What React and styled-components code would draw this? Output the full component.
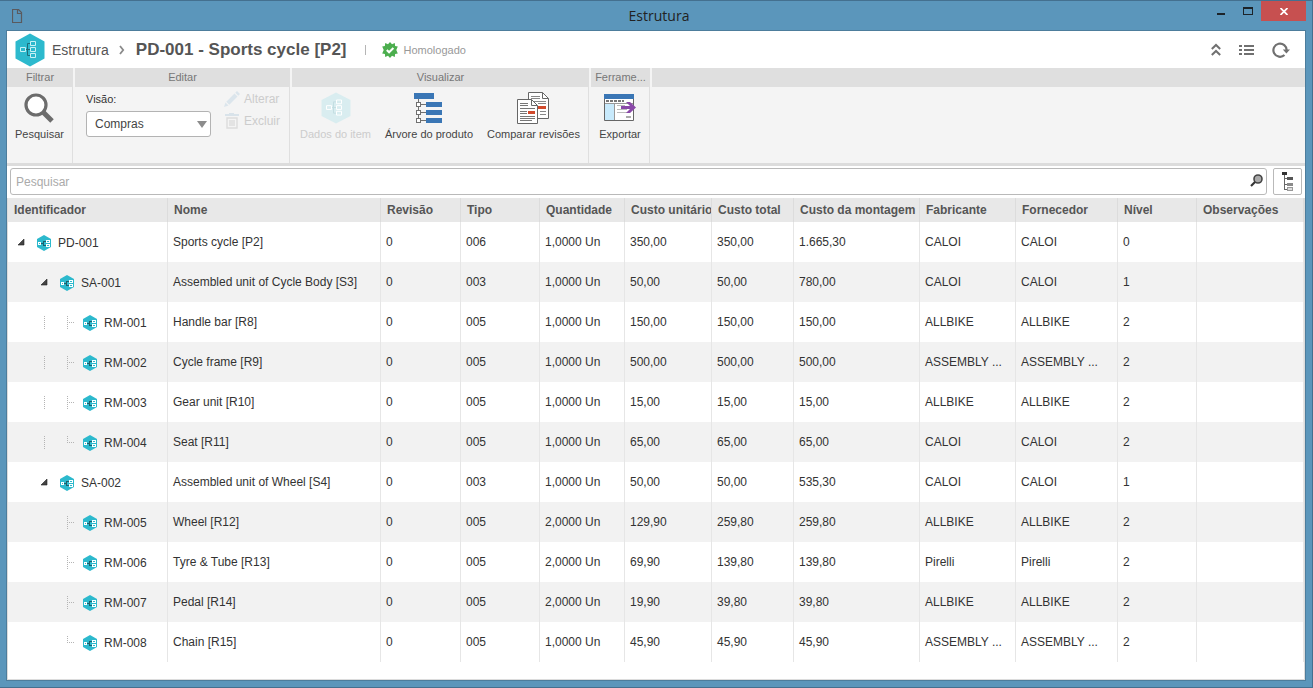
import { useState } from "react";
import styled, { createGlobalStyle } from "styled-components";

const rows = [
   { id: "PD-001", tree: ["open"], name: "Sports cycle [P2]", type: "006", qty: "1,0000 Un", unit: "350,00", total: "350,00", assembly: "1.665,30", maker: "CALOI", level: 0 },
   { id: "SA-001", tree: ["blank", "open"], name: "Assembled unit of Cycle Body [S3]", type: "003", qty: "1,0000 Un", unit: "50,00", total: "50,00", assembly: "780,00", maker: "CALOI", level: 1 },
   { id: "RM-001", tree: ["blank", "line", "branch"], name: "Handle bar [R8]", type: "005", qty: "1,0000 Un", unit: "150,00", total: "150,00", assembly: "150,00", maker: "ALLBIKE", level: 2 },
   { id: "RM-002", tree: ["blank", "line", "branch"], name: "Cycle frame [R9]", type: "005", qty: "1,0000 Un", unit: "500,00", total: "500,00", assembly: "500,00", maker: "ASSEMBLY ...", level: 2 },
   { id: "RM-003", tree: ["blank", "line", "branch"], name: "Gear unit [R10]", type: "005", qty: "1,0000 Un", unit: "15,00", total: "15,00", assembly: "15,00", maker: "ALLBIKE", level: 2 },
   { id: "RM-004", tree: ["blank", "line", "last"], name: "Seat [R11]", type: "005", qty: "1,0000 Un", unit: "65,00", total: "65,00", assembly: "65,00", maker: "CALOI", level: 2 },
   { id: "SA-002", tree: ["blank", "open"], name: "Assembled unit of Wheel [S4]", type: "003", qty: "1,0000 Un", unit: "50,00", total: "50,00", assembly: "535,30", maker: "CALOI", level: 1 },
   { id: "RM-005", tree: ["blank", "blank", "branch"], name: "Wheel [R12]", type: "005", qty: "2,0000 Un", unit: "129,90", total: "259,80", assembly: "259,80", maker: "ALLBIKE", level: 2 },
   { id: "RM-006", tree: ["blank", "blank", "branch"], name: "Tyre & Tube [R13]", type: "005", qty: "2,0000 Un", unit: "69,90", total: "139,80", assembly: "139,80", maker: "Pirelli", level: 2 },
   { id: "RM-007", tree: ["blank", "blank", "branch"], name: "Pedal [R14]", type: "005", qty: "2,0000 Un", unit: "19,90", total: "39,80", assembly: "39,80", maker: "ALLBIKE", level: 2 },
   { id: "RM-008", tree: ["blank", "blank", "last"], name: "Chain [R15]", type: "005", qty: "1,0000 Un", unit: "45,90", total: "45,90", assembly: "45,90", maker: "ASSEMBLY ...", level: 2 },
];

const columns = [
   { title: "Identificador", width: 160 },
   { title: "Nome", width: 213 },
   { title: "Revisão", width: 80 },
   { title: "Tipo", width: 79 },
   { title: "Quantidade", width: 85 },
   { title: "Custo unitário", width: 87 },
   { title: "Custo total", width: 82 },
   { title: "Custo da montagem", width: 126 },
   { title: "Fabricante", width: 96 },
   { title: "Fornecedor", width: 102 },
   { title: "Nível", width: 79 },
   { title: "Observações" },
];

export default function App() {
   const [view, setView] = useState("Compras");
   const [search, setSearch] = useState("");

   return (
      <>
         <GlobalStyle />
         <Window>
            <TitleBar>
               <FileIcon />
               <WindowTitle>Estrutura</WindowTitle>
               <WindowButtons>
                  <WindowButton aria-label="Minimizar">
                     <svg width="10" height="16" shapeRendering="crispEdges"><path d="M0 12h8v2H0z" fill="#1c2329" /></svg>
                  </WindowButton>
                  <WindowButton aria-label="Maximizar">
                     <svg width="10" height="16" shapeRendering="crispEdges"><path d="M0 6h10v8H0zM1 8v5h8V8z" fill="#1c2329" fillRule="evenodd" /></svg>
                  </WindowButton>
                  <CloseButton aria-label="Fechar">
                     <svg width="8" height="7" viewBox="0 0 8 7"><path d="M.5 0 7.5 7M7.5 0 .5 7" stroke="#fff" strokeWidth="1.7" /></svg>
                  </CloseButton>
               </WindowButtons>
            </TitleBar>

            <Panel>
               <Header>
                  <HexIcon width={30} height={34} />
                  <Crumb href="#">Estrutura</Crumb>
                  <svg width="6" height="10" viewBox="0 0 6 10"><path d="M1 1l3.2 4L1 9" fill="none" stroke="#8a8a8a" strokeWidth="1.8" /></svg>
                  <PageTitle>PD-001 - Sports cycle [P2]</PageTitle>
                  <Divider />
                  <SealIcon />
                  <Status>Homologado</Status>
                  <HeaderActions>
                     <IconButton aria-label="Recolher">
                        <svg width="10" height="13" viewBox="0 0 10 13"><path d="M.8 6 5 2l4.200 4M.8 12 5 8l4.200 4" fill="none" stroke="#707070" strokeWidth="2" /></svg>
                     </IconButton>
                     <IconButton aria-label="Lista">
                        <svg width="15" height="10" shapeRendering="crispEdges"><path d="M0 0h3v2H0zM5 0h10v2H5zM0 4h3v2H0zM5 4h10v2H5zM0 8h3v2H0zM5 8h10v2H5z" fill="#707070" /></svg>
                     </IconButton>
                     <IconButton aria-label="Atualizar">
                        <svg width="18" height="16" viewBox="0 0 18 16"><path d="M12.500 13A6.600 6.600 0 1 1 14.600 8.500" fill="none" stroke="#707070" strokeWidth="2.200" /><path d="M10.800 7.500h7.200l-3.600 4z" fill="#707070" /></svg>
                     </IconButton>
                  </HeaderActions>
               </Header>

               <Ribbon>
                  <Group $width={66}>
                     <GroupTitle>Filtrar</GroupTitle>
                     <GroupBody>
                        <Tool><SearchIcon />Pesquisar</Tool>
                     </GroupBody>
                  </Group>
                  <Group $width={215}>
                     <GroupTitle>Editar</GroupTitle>
                     <EditBody>
                        <ViewField>
                           <label htmlFor="view">Visão:</label>
                           <SelectBox>
                              <Select id="view" value={view} onChange={(e) => setView(e.target.value)}>
                                 <option>Compras</option>
                              </Select>
                              <svg width="10" height="7"><path d="M0 0h10L5 7z" fill="#8c8c8c" /></svg>
                           </SelectBox>
                        </ViewField>
                        <EditButtons>
                           <EditButton disabled><PencilIcon />Alterar</EditButton>
                           <EditButton disabled><TrashIcon />Excluir</EditButton>
                        </EditButtons>
                     </EditBody>
                  </Group>
                  <Group $width={297}>
                     <GroupTitle>Visualizar</GroupTitle>
                     <GroupBody>
                        <Tool disabled><HexIcon width={30} height={32} faded />Dados do item</Tool>
                        <Tool><ProductTreeIcon />Árvore do produto</Tool>
                        <Tool><CompareIcon />Comparar revisões</Tool>
                     </GroupBody>
                  </Group>
                  <Group $width={59}>
                     <GroupTitle>Ferrame...</GroupTitle>
                     <GroupBody>
                        <Tool><ExportIcon />Exportar</Tool>
                     </GroupBody>
                  </Group>
                  <Group>
                     <GroupTitle />
                  </Group>
               </Ribbon>

               <SearchBar>
                  <SearchBox>
                     <SearchInput
                        aria-label="Pesquisar"
                        placeholder="Pesquisar"
                        value={search}
                        onChange={(e) => setSearch(e.target.value)}
                     />
                     <SmallSearchIcon />
                  </SearchBox>
                  <TreeButton aria-label="Expandir estrutura"><SmallTreeIcon /></TreeButton>
               </SearchBar>

               <TableArea>
                  <Table>
                     <colgroup>
                        {columns.map((c) => <col key={c.title} width={c.width} />)}
                     </colgroup>
                     <thead>
                        <tr>
                           {columns.map((c) => <Th key={c.title}>{c.title}</Th>)}
                        </tr>
                     </thead>
                     <tbody>
                        {rows.map((row) => (
                           <Row key={row.id}>
                              <Td>
                                 <TreeCell>
                                    {row.tree.map((kind, i) => <TreeSlot key={i} kind={kind} />)}
                                    <ItemIcon />
                                    <span>{row.id}</span>
                                 </TreeCell>
                              </Td>
                              <Td>{row.name}</Td>
                              <Td>0</Td>
                              <Td>{row.type}</Td>
                              <Td>{row.qty}</Td>
                              <Td>{row.unit}</Td>
                              <Td>{row.total}</Td>
                              <Td>{row.assembly}</Td>
                              <Td>{row.maker}</Td>
                              <Td>{row.maker}</Td>
                              <Td>{row.level}</Td>
                              <Td />
                           </Row>
                        ))}
                     </tbody>
                  </Table>
               </TableArea>
            </Panel>
         </Window>
      </>
   );
}

function TreeSlot({ kind }) {
   return (
      <svg width="23" height="16" shapeRendering="crispEdges">
         {kind === "open" && <path d="M14 4v6H8z" fill="#444" shapeRendering="auto" stroke="#222" strokeWidth=".6" />}
         {(kind === "line" || kind === "branch") && <path d="M11.500 1v13" stroke="#b4b4b4" strokeDasharray="1 1" />}
         {kind === "last" && <path d="M11.500 1v7" stroke="#b4b4b4" strokeDasharray="1 1" />}
         {(kind === "branch" || kind === "last") && <path d="M13 7.500h5" stroke="#b4b4b4" strokeDasharray="1 1" />}
      </svg>
   );
}

// small hexagon drawn on whole pixels, shown before each item id
function ItemIcon() {
   return (
      <svg width="14" height="16" viewBox="0 0 14 16">
         <path d="M7 0l7 4v8l-7 4-7-4V4z" fill="#2cb9cd" />
         <g shapeRendering="crispEdges">
            <path d="M4 8h2v1H4zM6 6h3v1H7v3h2v1H6z" fill="#1d5f6b" />
            <path d="M1 7h3v3H1zM9 5h4v3H9zM9 9h4v3H9z" fill="#fff" />
            <path d="M2 8h1v1H2zM10 6h2v1h-2zM10 10h2v1h-2z" fill="#2cb9cd" />
         </g>
      </svg>
   );
}

function HexIcon({ width, height, faded }) {
   return (
      <svg width={width} height={height} viewBox="0 0 30 34" preserveAspectRatio="none">
         <path d="M15 .5l14.500 8v17L15 33.500.5 25.500v-17z" fill={faded ? "#d9edf0" : "#2cb9cd"} />
         <path d="M11 16.500h4M15 10.500h-2.500v12H15" fill="none" stroke={faded ? "#c3dde1" : "#1d6d79"} />
         <path d="M5.500 14.500h5v4h-5zM15.500 8.500h5v4h-5zM15.500 14.500h5v4h-5zM15.500 20.500h5v4h-5z" fill="none" stroke={faded ? "#fff" : "#c8f2f6"} />
      </svg>
   );
}

function FileIcon() {
   return (
      <svg width="11" height="14" viewBox="0 0 11 14">
         <path d="M.5.5h6l3 3v10h-9zM5.500.5v4h4" fill="none" stroke="#5a5a5e" strokeWidth="1.200" />
      </svg>
   );
}

function SealIcon() {
   return (
      <svg width="16" height="16" viewBox="0 0 16 16">
         <path d="M8 0l2 2.300L12.800 1l.3 2.900 2.700.6L14.300 8l1.500 3.500-2.700.6-.3 2.900-2.800-1.300L8 16l-2-2.300L3.200 15l-.3-2.900-2.700-.6L1.700 8 .2 4.500l2.700-.6L3.200 1 6 2.300z" fill="#4cae4e" />
         <path d="M4.800 8l2.300 2.300L11.400 6" fill="none" stroke="#fff" strokeWidth="2" />
      </svg>
   );
}

function SearchIcon() {
   return (
      <svg width="30" height="32" viewBox="0 0 30 32">
         <circle cx="12" cy="13" r="10" fill="#fff" stroke="#6c6c6c" strokeWidth="3.200" />
         <path d="M19 20l9 9" stroke="#6c6c6c" strokeWidth="5" />
      </svg>
   );
}

function PencilIcon() {
   return (
      <svg width="16" height="16" viewBox="0 0 16 16">
         <path d="M0 16l1.500-4.500 3 3zM2.300 10.700l8.200-8.200 3 3-8.200 8.200zM11.300 1.700L13 0l3 3-1.700 1.700z" fill="#dbe5ec" />
      </svg>
   );
}

function TrashIcon() {
   return (
      <svg width="16" height="16" viewBox="0 0 16 16">
         <path d="M1 1h4V0h5v1h5v2H1z" fill="#d9e3ea" />
         <path d="M3 5h10v10H3zM6 7v6M8 7v6M10 7v6" fill="none" stroke="#dcdcdc" strokeWidth="1.400" />
      </svg>
   );
}

function ProductTreeIcon() {
   return (
      <svg width="30" height="32" viewBox="2 0 30 32" shapeRendering="crispEdges">
         <path d="M2 1h20v6H2zM14 10h16v5H14zM14 18h16v5H14zM14 26h16v5H14z" fill="#3a76b5" />
         <path d="M6.500 7v22M6 12.500h8M6 20.500h8M6 28.500h8" fill="none" stroke="#707070" />
         <path d="M4.500 10.500h4v4h-4zM4.500 18.500h4v4h-4zM4.500 26.500h4v4h-4z" fill="#fff" stroke="#707070" />
      </svg>
   );
}

function CompareIcon() {
   return (
      <svg width="34" height="32" viewBox="0 0 34 32">
         <path d="M12.500.5h14l6 6v20h-20z" fill="#fff" stroke="#666" />
         <path d="M26.500.5v6h6" fill="none" stroke="#666" />
         <path d="M15 4.500h9M15 6.500h9M15 9.500h15M22 11.500h8M24 19.500h6M24 22.500h6" stroke="#888" />
         <path d="M22 14h8v3h-8z" fill="#d14a2c" />
         <path d="M1.500 7.500h14l6 6v18h-20z" fill="#fff" stroke="#666" />
         <path d="M15.500 7.500v6h6" fill="none" stroke="#666" />
         <path d="M4 11.500h8M4 13.500h8M4 16.500h15M4 19.500h7M4 21.500h7M4 24.500h15M4 26.500h15M4 28.500h12" stroke="#777" />
         <path d="M12 19h7v3h-7z" fill="#d14a2c" />
      </svg>
   );
}

function ExportIcon() {
   return (
      <svg width="32" height="32" viewBox="0 0 32 32">
         <path d="M.5 3.500h29v25H.5z" fill="#fff" stroke="#666" />
         <path d="M1 12h9v16H1z" fill="#c8eafc" />
         <path d="M0 2h30v5H0z" fill="#3a76b5" />
         <path d="M2 9h18" stroke="#777" strokeWidth="2" strokeDasharray="3 1" />
         <path d="M1 11.500h28M10.500 12v16" stroke="#999" />
         <path d="M13 13.500h8M13 17.500h10M13 20.500h10" stroke="#bbb" />
         <path d="M22 24h5v2h-5z" fill="#aaa" />
         <path d="M17 14h9l-4-4h4l6 5.500-6 5.500h-4l4-4h-9z" fill="#8a49a8" />
      </svg>
   );
}

function SmallSearchIcon() {
   return (
      <svg width="13" height="16" viewBox="0 0 13 16">
         <circle cx="8" cy="5" r="4" fill="#aaa" stroke="#444" strokeWidth="1.600" />
         <path d="M5 8L1 12" stroke="#333" strokeWidth="2.200" />
      </svg>
   );
}

function SmallTreeIcon() {
   return (
      <svg width="11" height="19" viewBox="0 0 11 19" shapeRendering="crispEdges">
         <path d="M2.500 3v14.500H6M3 6.500h3M3 12.500h3" fill="none" stroke="#666" />
         <path d="M0 0h5v3H0z" fill="#333" />
         <path d="M5 5h6v3H5z" fill="#555" />
         <path d="M5 11h6v3H5z" fill="#8a8a8a" />
         <path d="M5.500 15.500h5v3h-5z" fill="#ddd" stroke="#999" />
      </svg>
   );
}

const GlobalStyle = createGlobalStyle`
   * {
      box-sizing: border-box;
   }
   body {
      margin: 0;
      font-family: "Liberation Sans", Arial, sans-serif;
      font-size: 12px;
      color: #333;
   }
   button, input, select {
      font: inherit;
      color: inherit;
   }
   svg {
      display: block;
      flex: none;
   }
`;

const Window = styled.div`
   display: flex;
   flex-direction: column;
   min-height: 100vh;
   padding: 0 6px 6px;
   background-color: #5b96bb;
   border: solid #44708f;
   border-width: 1px 1px 1px 0;
`;
const TitleBar = styled.header`
   display: grid;
   grid-template-columns: 1fr auto 1fr;
   align-items: center;
   height: 29px;
   padding-left: 6px;
`;
const WindowTitle = styled.span`
   font-family: "Open Sans", "Noto Sans", sans-serif;
   font-size: 14px;
   line-height: 20px;
   color: #222;
`;
const WindowButtons = styled.div`
   display: flex;
   align-self: start;
   justify-content: flex-end;
`;
const WindowButton = styled.button`
   display: flex;
   width: 26px;
   height: 20px;
   padding: 0 8px;
   border: 0;
   background: none;
`;
const CloseButton = styled(WindowButton)`
   width: 45px;
   align-items: center;
   justify-content: center;
   background-color: #c75050;
`;

const Panel = styled.main`
   display: flex;
   flex: 1;
   flex-direction: column;
   background-color: #fff;
   border: 1px solid #4d7d9c;
`;
const Header = styled.div`
   display: flex;
   align-items: center;
   height: 37px;
   padding: 0 15px 0 8px;
`;
const Crumb = styled.a`
   margin: 0 10px 0 7px;
   font-size: 14px;
   color: #555;
   text-decoration: none;
`;
const PageTitle = styled.h1`
   margin: 0 18px 0 11px;
   font-size: 17px;
   line-height: 20px;
   color: #555;
`;
const Divider = styled.span`
   width: 1px;
   height: 10px;
   margin-right: 16px;
   background-color: #b5b5b5;
`;
const Status = styled.span`
   margin-left: 6px;
   font-size: 11px;
   color: #999;
`;
const HeaderActions = styled.div`
   display: flex;
   align-items: center;
   gap: 18px;
   margin-left: auto;
`;
const IconButton = styled.button`
   padding: 0;
   border: 0;
   background: none;
`;

const Ribbon = styled.div`
   display: flex;
   gap: 2px;
   height: 98px;
   background-color: #f4f4f4;
   border-bottom: 3px solid #dcdcdc;
`;
const Group = styled.section`
   display: flex;
   flex-direction: column;
   flex: ${(p) => (p.$width ? `0 0 ${p.$width}px` : "1")};
   min-width: 0;
`;
const GroupTitle = styled.div`
   height: 19px;
   overflow: hidden;
   font-size: 11px;
   line-height: 18px;
   color: #777;
   text-align: center;
   white-space: nowrap;
   background-color: #dfdfdf;
`;
const GroupBody = styled.div`
   display: flex;
   flex: 1;
   gap: 14px;
   justify-content: center;
   align-items: flex-start;
   padding-top: 5px;
   border-right: 1px solid #dfdfdf;
`;
const EditBody = styled(GroupBody)`
   gap: 13px;
   justify-content: flex-start;
   padding-left: 11px;
`;
const Tool = styled.button`
   display: flex;
   flex-direction: column;
   align-items: center;
   gap: 3px;
   padding: 0;
   border: 0;
   background: none;
   font-size: 11px;
   line-height: 14px;
   color: #444;
   white-space: nowrap;

   &:disabled {
      color: #ccc;
   }
`;
const ViewField = styled.div`
   display: flex;
   flex-direction: column;
   gap: 5px;
   font-size: 11px;
   line-height: 14px;
`;
const SelectBox = styled.div`
   position: relative;

   > svg {
      position: absolute;
      top: 10px;
      right: 4px;
      pointer-events: none;
   }
`;
const Select = styled.select`
   width: 125px;
   height: 26px;
   padding: 0 8px;
   appearance: none;
   font-size: 12px;
   color: #444;
   background-color: #fff;
   border: 1px solid #b3b3b3;
   border-radius: 3px;
`;
const EditButtons = styled.div`
   display: flex;
   flex-direction: column;
   gap: 8px;
`;
const EditButton = styled.button`
   display: flex;
   align-items: center;
   gap: 4px;
   height: 14px;
   padding: 0;
   border: 0;
   background: none;

   &:disabled {
      color: #ccc;
   }
`;

const SearchBar = styled.div`
   display: flex;
   gap: 6px;
   padding: 2px 3px 3px;
`;
const SearchBox = styled.div`
   display: flex;
   flex: 1;
   align-items: center;
   height: 27px;
   padding: 0 3px 0 5px;
   border: 1px solid #b9b9b9;
   border-radius: 3px;
`;
const SearchInput = styled.input`
   flex: 1;
   min-width: 0;
   padding: 0;
   border: 0;
   outline: 0;

   &::placeholder {
      color: #aaa;
   }
`;
const TreeButton = styled.button`
   display: flex;
   align-items: center;
   justify-content: center;
   width: 29px;
   height: 27px;
   padding: 0;
   background-color: #fff;
   border: 1px solid #b9b9b9;
   border-radius: 2px;
`;

const TableArea = styled.div`
   flex: 1;
   border: solid #dcdcdc;
   border-width: 0 1px 1px;
`;
const Table = styled.table`
   width: 100%;
   table-layout: fixed;
   border-collapse: separate;
   border-spacing: 0;
`;
const Th = styled.th`
   height: 24px;
   padding: 0 0 0 6px;
   overflow: hidden;
   text-align: left;
   white-space: nowrap;
   color: #555;
   background-color: #e8e8e8;
   border-right: 1px solid #dcdcdc;
`;
const Row = styled.tr`
   &:nth-child(even) {
      background-color: #f2f2f2;
   }
`;
const Td = styled.td`
   height: 40px;
   padding: 0 5px;
   overflow: hidden;
   text-overflow: ellipsis;
   white-space: nowrap;
   border-right: 1px solid #e6e6e6;

   &:first-child {
      padding: 2px 2px 0;
   }
`;
const TreeCell = styled.div`
   display: flex;
   align-items: center;

   > span {
      margin-left: 7px;
   }
   > svg:last-of-type {
      margin-left: 4px;
   }
`;
